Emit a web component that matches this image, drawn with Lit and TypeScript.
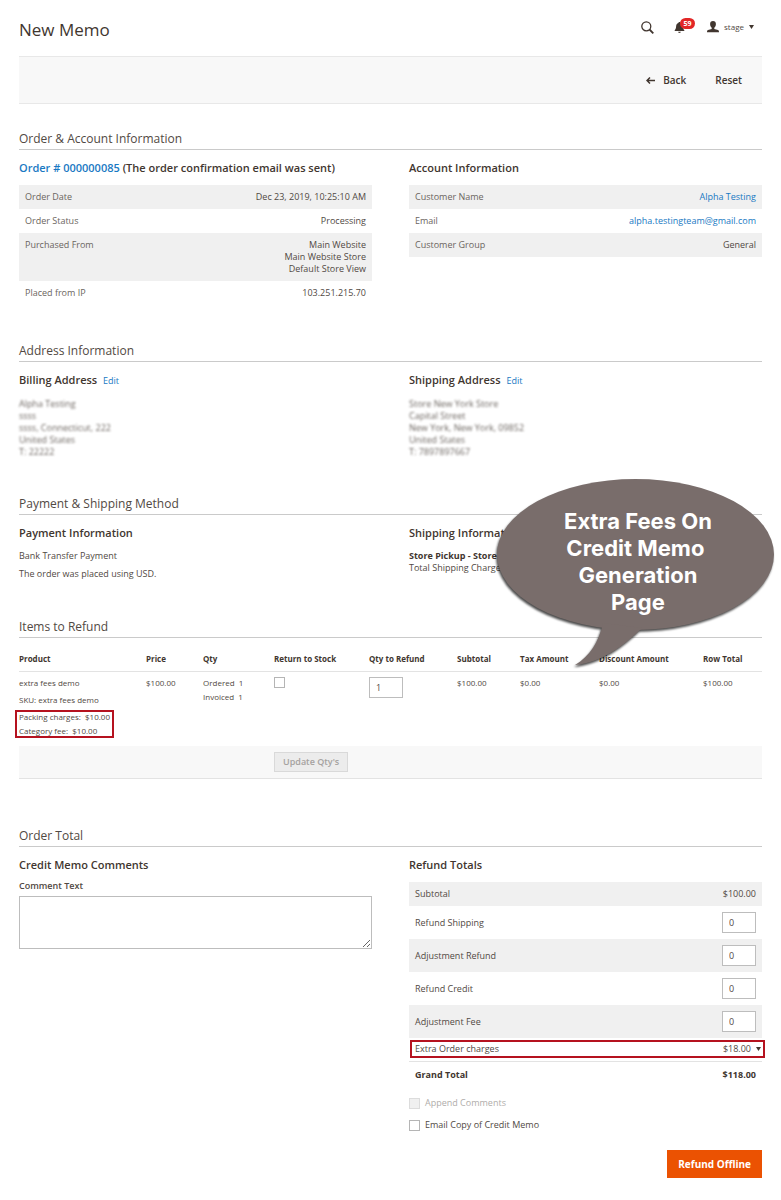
import { LitElement, html, css, svg } from "lit";
import { customElement, property } from "lit/decorators.js";
import { classMap } from "lit/directives/class-map.js";

interface Row {
  label: string;
  lines: string[];
  link?: string;
}

const orderRows: Row[] = [
  { label: "Order Date", lines: ["Dec 23, 2019, 10:25:10 AM"] },
  { label: "Order Status", lines: ["Processing"] },
  { label: "Purchased From", lines: ["Main Website", "Main Website Store", "Default Store View"] },
  { label: "Placed from IP", lines: ["103.251.215.70"] },
];

const accountRows: Row[] = [
  { label: "Customer Name", lines: ["Alpha Testing"], link: "#customer" },
  { label: "Email", lines: ["alpha.testingteam@gmail.com"], link: "mailto:alpha.testingteam@gmail.com" },
  { label: "Customer Group", lines: ["General"] },
];

const adjustments = [
  { id: "refund-shipping", label: "Refund Shipping" },
  { id: "adjustment-refund", label: "Adjustment Refund" },
  { id: "refund-credit", label: "Refund Credit" },
  { id: "adjustment-fee", label: "Adjustment Fee" },
];

const shared = css`
  * {
    box-sizing: border-box;
  }
  a {
    color: #1979c3;
    text-decoration: none;
  }
  table {
    width: 100%;
    border-collapse: separate;
    border-spacing: 0;
  }
  th,
  td {
    padding: 0;
    text-align: left;
    vertical-align: top;
    font-weight: 400;
  }
  input,
  button,
  textarea {
    font: inherit;
    color: inherit;
    margin: 0;
    border-radius: 0;
  }
  .num {
    display: block;
    width: 34px;
    height: 21px;
    padding: 0 6px;
    border: 1px solid #bdbdbd;
    background: #fff;
    color: #514943;
    font-size: 9px;
  }
  .tick {
    appearance: none;
    display: block;
    flex: none;
    width: 11px;
    height: 11px;
    border: 1px solid #b5b5b5;
    background: #fff;
  }
  .tick:disabled {
    background: #f0f0f0;
    border-color: #dcdcdc;
  }
  .tick:checked {
    background: #514943;
  }
`;

@customElement("info-table")
class InfoTable extends LitElement {
  @property({ attribute: false }) rows: Row[] = [];

  static styles = [
    shared,
    css`
      :host {
        display: block;
      }
      .cell {
        padding: 6px;
      }
      .label {
        color: #6b6560;
      }
      .value {
        text-align: right;
      }
      tr:nth-child(odd) .cell {
        background: #f0f0f0;
      }
      .line {
        display: block;
      }
    `,
  ];

  render() {
    return html`<table>
      <tbody>
        ${this.rows.map(
          (r) => html`<tr>
            <th class="cell label" scope="row">${r.label}</th>
            <td class="cell value">
              ${r.lines.map((l) =>
                r.link ? html`<a class="line" href=${r.link}>${l}</a>` : html`<span class="line">${l}</span>`
              )}
            </td>
          </tr>`
        )}
      </tbody>
    </table>`;
  }
}

@customElement("speech-callout")
class SpeechCallout extends LitElement {
  static styles = css`
    :host {
      display: block;
      width: 277px;
      height: 188px;
    }
    .shape {
      position: absolute;
      inset: 0;
      overflow: visible;
      filter: drop-shadow(-1px 2px 1px rgba(0, 0, 0, 0.7));
    }
    .text {
      position: relative;
      margin: 0;
      padding: 29px 0 0 5px;
      text-align: center;
      color: #fff;
      font: 700 22px/27px Inter, "Open Sans", sans-serif;
    }
  `;

  render() {
    return html`
      <svg class="shape" width="277" height="188" viewBox="0 0 277 188" aria-hidden="true">
        ${svg`<ellipse fill="#796d6b" cx="138.500" cy="75.500" rx="138.500" ry="75.500"/>
          <path fill="#796d6b" d="M106 144C102 163 93 177 78 186C104 184 128 166 145 149Z"/>`}
      </svg>
      <p class="text">Extra Fees On<br />Credit Memo&nbsp;<br />Generation<br />Page</p>
    `;
  }
}

@customElement("app-root")
class AppRoot extends LitElement {
  static styles = [
    shared,
    css`
      :host {
        display: block;
        padding: 0 19px 22px;
        background: #fff;
        color: #514943;
        font: 400 9px/12px "Open Sans", sans-serif;
      }
      .header {
        display: flex;
        align-items: center;
        justify-content: space-between;
        height: 56px;
        padding-top: 4px;
      }
      .title {
        margin: 0;
        color: #41362f;
        font-size: 17px;
        line-height: 24px;
        font-weight: 400;
      }
      .tools {
        display: flex;
        align-items: center;
        gap: 12px;
        padding: 0 8px 6px 0;
      }
      .tool {
        display: flex;
        align-items: center;
        padding: 0;
        border: 0;
        background: none;
      }
      .search {
        margin-right: 8px;
      }
      .bell {
        position: relative;
        width: 21px;
      }
      .badge {
        position: absolute;
        left: 6px;
        top: -3px;
        width: 15px;
        height: 11px;
        border-radius: 6px;
        background: #e22626;
        color: #fff;
        font-size: 7px;
        line-height: 11px;
        font-weight: 700;
        text-align: center;
      }
      .user {
        gap: 5px;
        font-size: 8px;
      }
      .toolbar {
        display: flex;
        align-items: center;
        justify-content: flex-end;
        gap: 29px;
        height: 48px;
        padding-right: 20px;
        border: 1px solid #e8e8e8;
        border-width: 1px 0;
        background: #f8f8f8;
      }
      .action {
        display: flex;
        align-items: center;
        gap: 8px;
        padding: 0;
        border: 0;
        background: none;
        color: #41362f;
        font-size: 10px;
        line-height: 16px;
        font-weight: 600;
      }
      .section {
        position: relative;
        padding-top: 37px;
      }
      .first {
        padding-top: 26px;
      }
      .refund {
        padding-top: 38px;
      }
      .totals {
        padding-top: 48px;
      }
      .heading {
        margin: 0 0 10px;
        padding-bottom: 1px;
        border-bottom: 1px solid #cacaca;
        font-size: 12px;
        line-height: 18px;
        font-weight: 400;
      }
      .flush {
        margin-bottom: 0;
      }
      .columns {
        display: grid;
        grid-template-columns: minmax(0, 1fr) minmax(0, 1fr);
        gap: 37px;
      }
      .sub {
        margin: 0 0 9px;
        color: #41362f;
        font-size: 11px;
        line-height: 16px;
        font-weight: 600;
      }
      .edit {
        margin-left: 3px;
        font-size: 9px;
        font-weight: 400;
      }
      .address {
        font-style: normal;
        filter: blur(1px);
        opacity: 0.85;
      }
      .para {
        margin: 0 0 6px;
      }
      .callout {
        position: absolute;
        top: 21px;
        right: -12px;
        z-index: 1;
      }
      .strong {
        color: #41362f;
        font-weight: 700;
      }
      .items {
        table-layout: fixed;
        font-size: 8px;
      }
      .c-product { width: 127px; }
      .c-price { width: 57px; }
      .c-qty { width: 71px; }
      .c-return { width: 95px; }
      .c-refund { width: 88px; }
      .c-sub { width: 63px; }
      .c-tax { width: 79px; }
      .c-discount { width: 104px; }
      .c-total { width: 59px; }
      .items thead th {
        padding: 15px 0 6px;
        border-bottom: 1px solid #e3e3e3;
        color: #41362f;
        font-weight: 700;
        white-space: nowrap;
      }
      .items tbody td {
        padding: 5px 0 9px;
      }
      .items tfoot td {
        padding: 6px 0;
        border-bottom: 1px solid #e3e3e3;
        background: #f8f8f8;
      }
      .name,
      .sku {
        margin-bottom: 5px;
      }
      .pair {
        margin-bottom: 2px;
      }
      .fees {
        position: relative;
        width: max-content;
      }
      .fees::after,
      .charges::after {
        content: "";
        position: absolute;
        border: 2px solid #b5121f;
        pointer-events: none;
      }
      .fees::after {
        inset: -1px -4px;
      }
      .fee + .fee {
        margin-top: 2px;
      }
      .update {
        height: 20px;
        padding: 0 8px;
        border: 1px solid #d9d9d9;
        background: #ececec;
        color: #a5a29f;
        font-size: 9px;
        font-weight: 600;
        line-height: 18px;
      }
      .label {
        display: block;
        margin: -2px 0 4px;
        font-weight: 600;
      }
      .comment {
        display: block;
        width: 100%;
        height: 53px;
        border: 1px solid #bdbdbd;
        background: #fff;
        resize: vertical;
      }
      .sum {
        display: flex;
        align-items: center;
        justify-content: space-between;
        padding: 6px;
      }
      .shade {
        background: #f0f0f0;
      }
      .charges {
        position: relative;
        padding: 5px 6px 6px;
      }
      .charges::after {
        inset: 2px -3px 3px 1px;
      }
      .amount {
        display: flex;
        align-items: center;
        gap: 5px;
        margin-right: -6px;
        padding: 0 1px 0 0;
        border: 0;
        background: none;
      }
      .grand {
        padding-top: 7px;
        border-top: 1px solid #e3e3e3;
        color: #41362f;
        font-weight: 700;
      }
      .check {
        display: flex;
        align-items: center;
        gap: 5px;
        margin-top: 10px;
      }
      .dim {
        color: #b0adaa;
      }
      .submit {
        display: block;
        height: 28px;
        margin: 19px 0 0 auto;
        padding: 0 11px;
        border: 0;
        background: #eb5202;
        color: #fff;
        font-size: 10px;
        font-weight: 700;
      }
    `,
  ];

  private caret() {
    return html`<svg width="5" height="4" viewBox="0 0 5 4" aria-hidden="true">
      <path d="M0 0H5L2.500 4Z" fill="#41362f" />
    </svg>`;
  }

  render() {
    return html`
      <header class="header">
        <h1 class="title">New Memo</h1>
        <div class="tools">
          <button class="tool search" aria-label="Search">
            <svg width="13" height="13" viewBox="0 0 13 13" fill="none" stroke="#41362f">
              <circle cx="5.300" cy="5.300" r="4.500" stroke-width="1.300" />
              <path d="M8.500 8.500L12.300 12.300" stroke-width="1.800" />
            </svg>
          </button>
          <button class="tool bell" aria-label="Notifications">
            <svg width="11" height="13" viewBox="0 0 11 13" fill="#41362f">
              <path d="M5.500 1C6.200 1 6.600 1.500 6.600 2.100C8.300 2.600 8.800 4 8.900 5.600C9 7.700 9.500 8.500 10.300 9.300V10H.700V9.300C1.500 8.500 2 7.700 2.100 5.600C2.200 4 2.700 2.600 4.400 2.100C4.400 1.500 4.800 1 5.500 1ZM4.200 10.700H6.800C6.600 12.300 4.400 12.300 4.200 10.700Z" />
            </svg>
            <span class="badge">59</span>
          </button>
          <button class="tool user">
            <svg width="12" height="12" viewBox="0 0 12 12" fill="#41362f">
              <path d="M6 0C7.900 0 8.900 1.300 8.900 3.100C8.900 4.700 8.200 6 7.300 6.700V7.900L11 9.100C11.700 9.400 12 9.900 12 11.200H0C0 9.900.300 9.400 1 9.100L4.700 7.900V6.700C3.800 6 3.100 4.700 3.100 3.100C3.100 1.300 4.100 0 6 0Z" />
            </svg>
            <span>stage</span>
            ${this.caret()}
          </button>
        </div>
      </header>

      <div class="toolbar">
        <button class="action">
          <svg width="9" height="7" viewBox="0 0 9 7" fill="none" stroke="#41362f" stroke-width="1.500">
            <path d="M9 3.500H1.200M4 .500L1 3.500L4 6.500" />
          </svg>
          Back
        </button>
        <button class="action">Reset</button>
      </div>

      <section class="section first">
        <h2 class="heading">Order &amp; Account Information</h2>
        <div class="columns">
          <div>
            <h3 class="sub"><a href="#order">Order # 000000085</a> (The order confirmation email was sent)</h3>
            <info-table .rows=${orderRows}></info-table>
          </div>
          <div>
            <h3 class="sub">Account Information</h3>
            <info-table .rows=${accountRows}></info-table>
          </div>
        </div>
      </section>

      <section class="section">
        <h2 class="heading">Address Information</h2>
        <div class="columns">
          <div>
            <h3 class="sub">Billing Address <a class="edit" href="#billing">Edit</a></h3>
            <address class="address">
              Alpha Testing<br />ssss<br />ssss, Connecticut, 222<br />United States<br />T: 22222
            </address>
          </div>
          <div>
            <h3 class="sub">Shipping Address <a class="edit" href="#shipping">Edit</a></h3>
            <address class="address">
              Store New York Store<br />Capital Street<br />New York, New York, 09852<br />United States<br />T:
              7897897667
            </address>
          </div>
        </div>
      </section>

      <section class="section">
        <h2 class="heading">Payment &amp; Shipping Method</h2>
        <div class="columns">
          <div>
            <h3 class="sub">Payment Information</h3>
            <p class="para">Bank Transfer Payment</p>
            <div>The order was placed using USD.</div>
          </div>
          <div>
            <h3 class="sub">Shipping Information</h3>
            <div class="strong">Store Pickup - Store</div>
            <div>Total Shipping Charges</div>
          </div>
        </div>
        <speech-callout class="callout"></speech-callout>
      </section>

      <section class="section refund">
        <h2 class="heading flush">Items to Refund</h2>
        <table class="items">
          <colgroup>
            ${["product", "price", "qty", "return", "refund", "sub", "tax", "discount", "total"].map(
              (c) => html`<col class="c-${c}" />`
            )}
          </colgroup>
          <thead>
            <tr>
              <th scope="col">Product</th>
              <th scope="col">Price</th>
              <th scope="col">Qty</th>
              <th scope="col" id="return-label">Return to Stock</th>
              <th scope="col" id="refund-label">Qty to Refund</th>
              <th scope="col">Subtotal</th>
              <th scope="col">Tax Amount</th>
              <th scope="col">Discount Amount</th>
              <th scope="col">Row Total</th>
            </tr>
          </thead>
          <tbody>
            <tr>
              <td>
                <div class="name">extra fees demo</div>
                <div class="sku">SKU: extra fees demo</div>
                <div class="fees">
                  <div class="fee">Packing charges:&nbsp; $10.00</div>
                  <div class="fee">Category fee:&nbsp; $10.00</div>
                </div>
              </td>
              <td>$100.00</td>
              <td>
                <div class="pair">Ordered&nbsp; 1</div>
                <div class="pair">Invoiced&nbsp; 1</div>
              </td>
              <td><input class="tick" type="checkbox" aria-labelledby="return-label" /></td>
              <td><input class="num" type="text" value="1" aria-labelledby="refund-label" /></td>
              <td>$100.00</td>
              <td>$0.00</td>
              <td>$0.00</td>
              <td>$100.00</td>
            </tr>
          </tbody>
          <tfoot>
            <tr>
              <td colspan="3"></td>
              <td colspan="6"><button class="update" disabled>Update Qty's</button></td>
            </tr>
          </tfoot>
        </table>
      </section>

      <section class="section totals">
        <h2 class="heading">Order Total</h2>
        <div class="columns">
          <div>
            <h3 class="sub">Credit Memo Comments</h3>
            <label class="label" for="comment">Comment Text</label>
            <textarea class="comment" id="comment"></textarea>
          </div>
          <div>
            <h3 class="sub">Refund Totals</h3>
            <div class="sum shade"><span>Subtotal</span><span>$100.00</span></div>
            ${adjustments.map(
              (a, i) => html`<div class=${classMap({ sum: true, shade: i % 2 === 1 })}>
                <label for=${a.id}>${a.label}</label>
                <input class="num" id=${a.id} type="text" value="0" />
              </div>`
            )}
            <div class="sum charges">
              <span>Extra Order charges</span>
              <button class="amount">$18.00 ${this.caret()}</button>
            </div>
            <div class="sum grand"><span>Grand Total</span><span>$118.00</span></div>
            <label class="check dim"><input class="tick" type="checkbox" disabled />Append Comments</label>
            <label class="check"><input class="tick" type="checkbox" />Email Copy of Credit Memo</label>
            <button class="submit">Refund Offline</button>
          </div>
        </div>
      </section>
    `;
  }
}
